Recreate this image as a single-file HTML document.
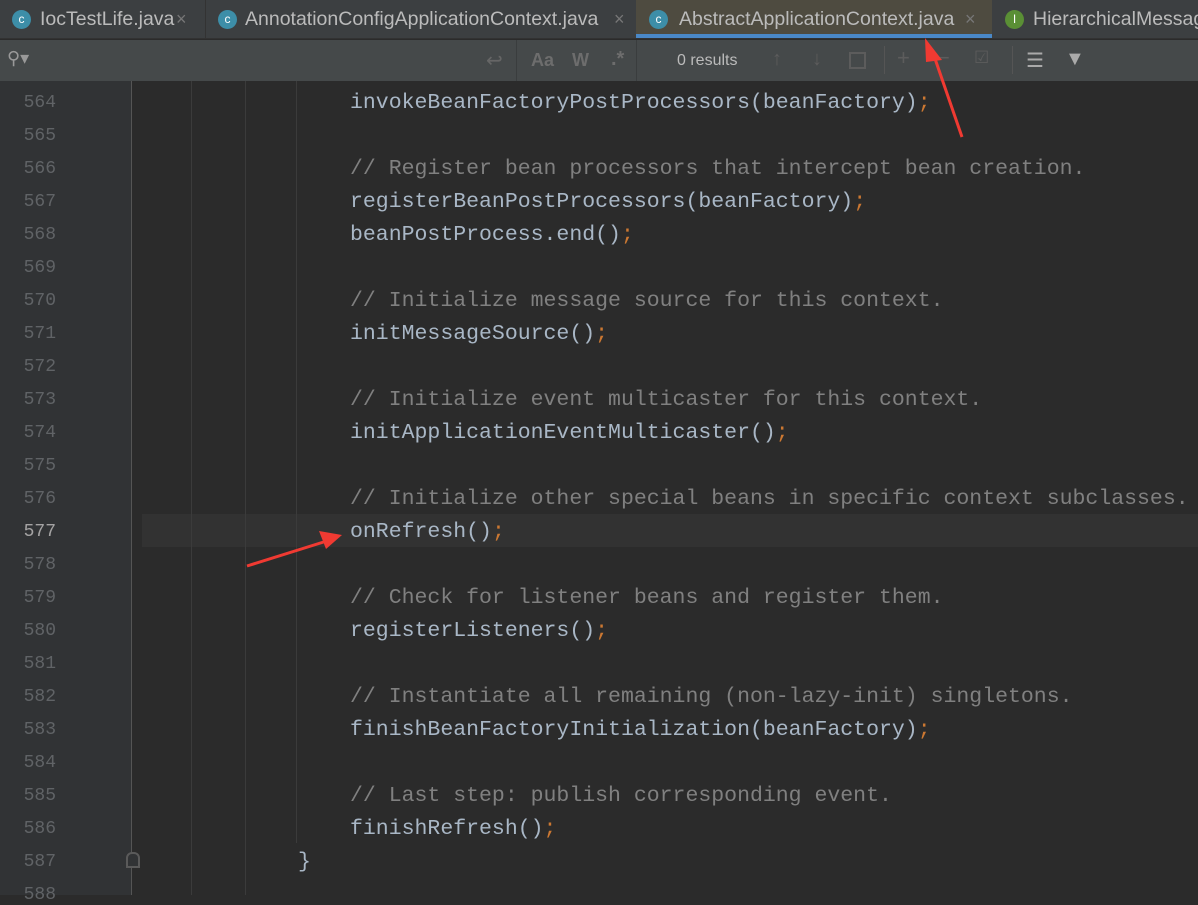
<!DOCTYPE html>
<html><head><style>
*{margin:0;padding:0;box-sizing:border-box}
body{width:1198px;height:895px;overflow:hidden;background:#2b2b2b;position:relative;font-family:"Liberation Sans",sans-serif}
#tabs{position:absolute;left:0;top:0;width:1198px;height:39px;background:#3c3f41;border-bottom:1px solid #323232}
.tab{position:absolute;top:0;height:38px;color:#bbb;font-size:19.5px;line-height:38px;white-space:nowrap;overflow:hidden}
.ic{position:absolute;top:10px;width:19px;height:19px;border-radius:50%;color:#fff;font-size:12px;line-height:19px;text-align:center}
.x{color:#777;font-size:18px}
#search{position:absolute;left:0;top:40px;width:1198px;height:41px;background:#45494a}
#gut{position:absolute;left:0;top:81px;width:132px;height:814px;background:#313335;border-right:1px solid #555}
.ln{position:absolute;left:0;width:56px;text-align:right;font-family:"Liberation Mono",monospace;font-size:18px;color:#606366}
.code{position:absolute;left:350px;font-family:"Liberation Mono",monospace;font-size:21.5px;color:#a9b7c6;white-space:pre}
.c{color:#808080}.s{color:#cc7832}
.g{position:absolute;top:81px;width:1px;background:#3b3b3b}
</style></head><body>
<div id="tabs">
 <div class="tab" style="left:0;width:205px;background:#3c3f41"><div class="ic" style="left:12px;background:#3d8ea8">c</div><span style="position:absolute;left:40px">IocTestLife.java</span><span class="x" style="position:absolute;left:176px">×</span></div>
 <div class="tab" style="left:205px;width:430px;background:#3c3f41;border-left:1px solid #333"><div class="ic" style="left:12px;background:#3d8ea8">c</div><span style="position:absolute;left:39px">AnnotationConfigApplicationContext.java</span><span class="x" style="position:absolute;left:408px">×</span></div>
 <div class="tab" style="left:636px;width:356px;background:#4e4b40"><div class="ic" style="left:13px;background:#3d8ea8">c</div><span style="position:absolute;left:43px">AbstractApplicationContext.java</span><span class="x" style="position:absolute;left:329px">×</span><div style="position:absolute;left:0;bottom:0;width:356px;height:4px;background:#4a88c7"></div></div>
 <div class="tab" style="left:993px;width:205px"><div class="ic" style="left:12px;background:#5a8f35">I</div><span style="position:absolute;left:40px">HierarchicalMessag</span></div>
</div>
<div id="search">
 <span style="position:absolute;left:7px;top:8px;color:#999;font-size:18px">⚲▾</span>
 <span style="position:absolute;left:486px;top:8px;color:#666;font-size:20px">↩</span>
 <div style="position:absolute;left:516px;top:0;width:1px;height:41px;background:#3a3d3e"></div>
 <span style="position:absolute;left:531px;top:10px;color:#6d6d6d;font-size:18px;font-weight:bold">Aa</span>
 <span style="position:absolute;left:572px;top:10px;color:#6d6d6d;font-size:18px;font-weight:bold">W</span>
 <span style="position:absolute;left:611px;top:8px;color:#6d6d6d;font-size:20px;font-weight:bold">.*</span>
 <div style="position:absolute;left:636px;top:0;width:1px;height:41px;background:#3a3d3e"></div>
 <span style="position:absolute;left:677px;top:12px;color:#bbb;font-size:16px">0 results</span>
 <span style="position:absolute;left:772px;top:8px;color:#5c5c5c;font-size:20px">↑</span>
 <span style="position:absolute;left:812px;top:8px;color:#5c5c5c;font-size:20px">↓</span>
 <div style="position:absolute;left:849px;top:12px;width:17px;height:17px;border:2px solid #5c5c5c"></div>
 <div style="position:absolute;left:884px;top:6px;width:1px;height:28px;background:#555"></div>
 <span style="position:absolute;left:897px;top:5px;color:#5c5c5c;font-size:22px">+</span>
 <span style="position:absolute;left:937px;top:5px;color:#5c5c5c;font-size:22px">−</span>
 <span style="position:absolute;left:974px;top:8px;color:#5c5c5c;font-size:17px">☑</span>
 <div style="position:absolute;left:1012px;top:6px;width:1px;height:28px;background:#555"></div>
 <span style="position:absolute;left:1026px;top:8px;color:#aaa;font-size:20px">☰</span>
 <span style="position:absolute;left:1065px;top:8px;color:#aaa;font-size:20px">▼</span>
</div>
<div id="gut"></div>
<div style="position:absolute;left:142px;top:514px;width:1056px;height:33px;background:#323232"></div>
<div class="g" style="left:191px;height:814px"></div>
<div class="g" style="left:245px;height:814px"></div>
<div class="g" style="left:296px;top:81px;height:762px"></div>
<div style="position:absolute;left:126px;top:852px;width:14px;height:16px;border:2px solid #5a5a5a;border-radius:6px 6px 0 0;background:#313335"></div>
<div id="lines"></div>
<script>
var L={564:['invokeBeanFactoryPostProcessors(beanFactory)',1],566:['// Register bean processors that intercept bean creation.',0],567:['registerBeanPostProcessors(beanFactory)',1],568:['beanPostProcess.end()',1],570:['// Initialize message source for this context.',0],571:['initMessageSource()',1],573:['// Initialize event multicaster for this context.',0],574:['initApplicationEventMulticaster()',1],576:['// Initialize other special beans in specific context subclasses.',0],577:['onRefresh()',1],579:['// Check for listener beans and register them.',0],580:['registerListeners()',1],582:['// Instantiate all remaining (non-lazy-init) singletons.',0],583:['finishBeanFactoryInitialization(beanFactory)',1],585:['// Last step: publish corresponding event.',0],586:['finishRefresh()',1]};
var h='';
for(var n=564;n<=588;n++){var y=84+(n-564)*33;
h+='<div class="ln" style="top:'+(y+9)+'px;'+(n==577?'color:#a4a3a3':'')+'">'+n+'</div>';
if(L[n]){var t=L[n];h+='<div class="code" style="top:'+(y+7)+'px">'+(t[1]?t[0]+'<span class="s">;</span>':'<span class="c">'+t[0]+'</span>')+'</div>';}
if(n==587)h+='<div class="code" style="left:298px;top:'+(y+7)+'px">}</div>';}
document.getElementById('lines').innerHTML=h;
</script>
<svg style="position:absolute;left:0;top:0" width="1198" height="895">
<path d="M962 137 L932 50" stroke="#f03a32" stroke-width="3"/>
<path d="M925 38 L942 60 L926 62 Z" fill="#f03a32"/>
<path d="M247 566 L330 540" stroke="#f03a32" stroke-width="3"/>
<path d="M342 535 L319 531 L326 549 Z" fill="#f03a32"/>
</svg>
</body></html>
